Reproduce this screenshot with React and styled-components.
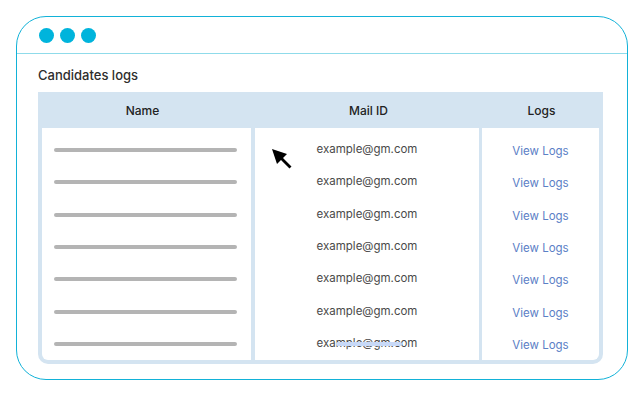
import React from "react";
import styled, { createGlobalStyle } from "styled-components";

const GlobalStyle = createGlobalStyle`
  html, body {
    margin: 0;
    padding: 0;
    background: #ffffff;
  }
  body {
    font-family: Inter, "Open Sans", sans-serif;
  }
`;

const ROWS = 7;

function Cursor() {
  return (
    <CursorWrap>
      <svg width="21" height="21" viewBox="0 0 21 21">
        <polygon points="0,0 15,5 11,9 19.5,17.5 17.5,19.5 9,11 5,15" fill="#000" />
      </svg>
    </CursorWrap>
  );
}

function App() {
  const rows = Array.from({ length: ROWS });
  return (
    <Page>
      <GlobalStyle />
      <Window>
        <TopBar>
          <Dot />
          <Dot />
          <Dot />
        </TopBar>
        <Content>
          <Title>Candidates logs</Title>
          <Table>
            <HeadRow>
              <HeadCell $shift={8}>Name</HeadCell>
              <HeadCell>Mail ID</HeadCell>
              <HeadCell $shift={2}>Logs</HeadCell>
            </HeadRow>
            <Body>
              <Column $sep="4px">
                {rows.map((_, i) => (
                  <Cell key={i} $start>
                    <Bar />
                  </Cell>
                ))}
              </Column>
              <Column $sep="3px">
                {rows.map((_, i) => (
                  <Cell key={i}>
                    <Mail>
                      example@gm.com
                      {i === ROWS - 1 && <Smear />}
                    </Mail>
                  </Cell>
                ))}
              </Column>
              <Column>
                {rows.map((_, i) => (
                  <Cell key={i}>
                    <LogLink href="#">View Logs</LogLink>
                  </Cell>
                ))}
              </Column>
              <Cursor />
            </Body>
          </Table>
        </Content>
      </Window>
    </Page>
  );
}

export default App;

const Page = styled.div`
  width: 644px;
  height: 395px;
  padding: 16px 0 0 16px;
  box-sizing: border-box;
`;

const Window = styled.div`
  width: 612px;
  height: 364px;
  box-sizing: border-box;
  border: 1.6px solid #12b2d8;
  border-radius: 30px;
  display: flex;
  flex-direction: column;
`;

const TopBar = styled.div`
  height: 37px;
  box-sizing: border-box;
  display: flex;
  align-items: center;
  gap: 6px;
  padding: 1px 0 0 22px;
  border-bottom: 1.5px solid #8fdbea;
`;

const Dot = styled.span`
  width: 15px;
  height: 15px;
  border-radius: 50%;
  background: #00b4dc;
`;

const Content = styled.div`
  padding: 13px 0 0 21px;
`;

const Title = styled.div`
  font-size: 13px;
  font-weight: 500;
  color: #2d2d2d;
  line-height: 16px;
  margin-bottom: 9px;
`;

const Table = styled.div`
  width: 565px;
`;

const HeadRow = styled.div`
  display: grid;
  grid-template-columns: 217px 227px 121px;
  height: 36px;
  background: #d4e4f1;
`;

const HeadCell = styled.div`
  display: flex;
  align-items: center;
  justify-content: center;
  font-size: 12px;
  font-weight: 500;
  color: #222;
  padding-top: 1px;
  padding-right: ${(p) => p.$shift || 0}px;
`;

const Body = styled.div`
  position: relative;
  display: grid;
  grid-template-columns: 213px 227px 117px;
  box-sizing: border-box;
  border: 4px solid #d4e4f1;
  border-top: none;
  border-radius: 0 0 10px 10px;
`;

const Column = styled.div`
  display: flex;
  flex-direction: column;
  padding: 6px 0 0;
  border-right: ${(p) => (p.$sep ? `${p.$sep} solid #d4e4f1` : "none")};
`;

const Cell = styled.div`
  height: 32.3px;
  display: flex;
  align-items: center;
  justify-content: ${(p) => (p.$start ? "flex-start" : "center")};
  padding-left: ${(p) => (p.$start ? "12px" : "0")};
`;

const Bar = styled.div`
  width: 183px;
  height: 4px;
  border-radius: 2px;
  background: #b4b4b4;
`;

const Mail = styled.span`
  position: relative;
  font-size: 11.5px;
  color: #4a4a4a;
  margin-bottom: 2px;
`;

const Smear = styled.span`
  position: absolute;
  left: 19px;
  top: 6px;
  width: 66px;
  height: 4px;
  border-radius: 2px;
  background: #c8d9f7;
`;

const LogLink = styled.a`
  font-size: 11.5px;
  color: #5b80c6;
  text-decoration: none;
  margin-top: 2px;
`;

const CursorWrap = styled.div`
  position: absolute;
  left: 230px;
  top: 21px;
  line-height: 0;
`;
